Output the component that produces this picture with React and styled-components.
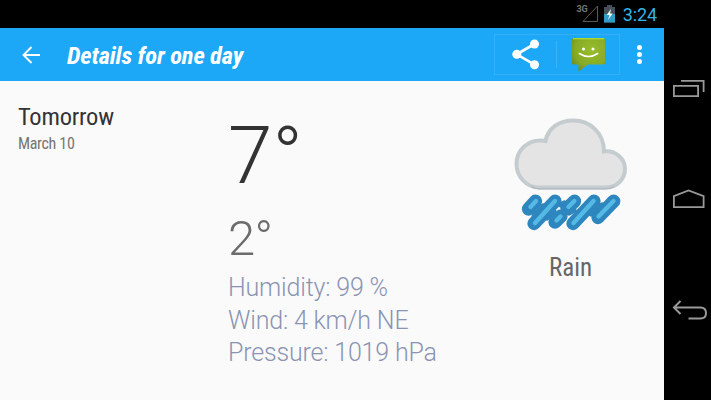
import React from "react";
import styled, { createGlobalStyle } from "styled-components";

const GlobalStyle = createGlobalStyle`
  * { box-sizing: border-box; }
  body { margin: 0; background: #000; overflow: hidden; }
  svg { display: block; flex: none; }
`;

const Device = styled.div`
  display: grid;
  grid-template-columns: 664px 47px;
  width: 711px;
  height: 400px;
  background: #000;
  font-family: Roboto, "Liberation Sans", sans-serif;
`;

const Screen = styled.div`
  display: grid;
  grid-template-rows: 28px 53px 1fr;
  min-width: 0;
`;

const StatusBar = styled.div`
  display: flex;
  align-items: flex-start;
  justify-content: flex-end;
  padding-right: 7px;
  background: #000;
`;

const StatusGroup = styled.div`
  display: flex;
  align-items: flex-start;
  gap: 5px;
  padding-top: 5px;
`;

const NetworkLabel = styled.span`
  margin-right: -11px;
  font-weight: 700;
  font-size: 9px;
  line-height: 9px;
  color: #777;
`;

const Clock = styled.span`
  margin-left: 8px;
  font-size: 18px;
  line-height: 29px;
  letter-spacing: -0.1px;
  color: #33b5e5;
`;

const AppBar = styled.header`
  display: flex;
  align-items: center;
  padding-left: 21px;
  background: #1da8f7;
`;

const Condensed = styled.span`
  display: block;
  width: max-content;
  font-family: "Roboto Condensed", Roboto, sans-serif;
  font-stretch: 75%;
  font-size: ${(p) => p.$size}px;
  line-height: ${(p) => p.$line}px;
  font-weight: ${(p) => p.$weight || 400};
  letter-spacing: ${(p) => p.$tracking || 0}px;
  color: ${(p) => p.$color};
`;

const Title = styled(Condensed)`
  flex: 1;
  margin-left: 26px;
  padding-top: 3px;
  font-style: italic;
  white-space: nowrap;
`;

const RainLabel = styled(Condensed)`
  margin: 19px 0 0 2px;
`;

const ShareBox = styled.div`
  display: flex;
  align-items: center;
  width: 126px;
  height: 41px;
  padding-left: 17px;
  border: 1px solid #35affa;
`;

const Divider = styled.div`
  width: 1px;
  height: 27px;
  margin: 0 15px 0 16px;
  background: #3bb1f9;
`;

const Overflow = styled.div`
  display: flex;
  flex-direction: column;
  gap: 2px;
  margin: 0 22px 0 17px;
`;

const Dot = styled.i`
  width: 5px;
  height: 5px;
  border-radius: 50%;
  background: #fff;
`;

const Content = styled.main`
  display: grid;
  grid-template-columns: 210px 266px 188px;
  padding-left: 18px;
  background: #fafafa;
  overflow: hidden;
`;

const DateColumn = styled.section`
  padding-top: 21px;
`;

const Readings = styled.section`
  padding-top: 29px;
`;

const Temperature = styled.div`
  font-size: ${(p) => p.$size}px;
  line-height: ${(p) => p.$line}px;
  font-weight: 300;
  letter-spacing: ${(p) => p.$tracking || 0}px;
  color: ${(p) => p.$color};
`;

const LowTemperature = styled(Temperature)`
  padding-top: 2px;
`;

const Measurement = styled.div`
  font-size: 25px;
  line-height: 32.5px;
  font-weight: 300;
  letter-spacing: -0.18px;
  color: #8a94b2;
  white-space: nowrap;
`;

const Conditions = styled.section`
  display: flex;
  flex-direction: column;
  align-items: center;
  width: 151px;
  padding-top: 35px;
`;

const NavBar = styled.nav`
  display: flex;
  flex-direction: column;
  gap: 89px;
  padding: 79px 0 0 7px;
  background: #000;
`;

const SignalIcon = () => (
  <svg width="17" height="18" viewBox="0 0 17 18">
    <path d="M15.500 1V16.500H1Z" fill="none" stroke="#5a5a5a" />
  </svg>
);

const BatteryIcon = () => (
  <svg width="11" height="18" viewBox="0 0 11 18">
    <path d="M3 0h5v2h3v15.500H0V2h3z" fill="#47515b" />
    <path d="M0 9h11v8.500H0z" fill="#2f9dc6" />
    <path d="M7.200 3.800 2.700 10h2.800L4 15 8.600 8.500H6z" fill="#fff" />
  </svg>
);

const BackArrow = () => (
  <svg width="20" height="18" viewBox="0 0 20 18">
    <path d="M19 9H3M10.500 1 2.500 9l8 8" fill="none" stroke="#fff" strokeWidth="1.900" />
  </svg>
);

const ShareIcon = () => (
  <svg width="28" height="31" viewBox="0 0 28 31">
    <path d="M22.500 5 4.700 15.300l17.800 10.400" fill="none" stroke="#fff" strokeWidth="2.700" />
    <g fill="#fff">
      <circle cx="22.500" cy="5" r="4.500" />
      <circle cx="4.800" cy="15.300" r="4.500" />
      <circle cx="22.500" cy="25.700" r="4.500" />
    </g>
  </svg>
);

const MessageIcon = () => (
  <svg width="33" height="34" viewBox="0 0 33 34">
    <defs>
      <radialGradient id="bubble" cx=".6" cy=".35" r=".85">
        <stop offset="0" stopColor="#98bd2c" />
        <stop offset=".6" stopColor="#86aa25" />
        <stop offset="1" stopColor="#5f7f18" />
      </radialGradient>
    </defs>
    <path d="M1.500 0h30Q33 0 33 1.500V25Q33 26.500 31.500 26.500H16L6.500 33.500V26.500h-5Q0 26.500 0 25V1.500Q0 0 1.500 0z" fill="url(#bubble)" />
    <path d="M1 .7h31" stroke="#b4dc2d" strokeWidth="1.200" />
    <g fill="#fff">
      <circle cx="11.500" cy="11" r="1.500" />
      <circle cx="21" cy="11" r="1.500" />
    </g>
    <path d="M7.300 15.500Q16.500 21.500 25.700 15.500" fill="none" stroke="#fff" strokeWidth="1.500" strokeLinecap="round" />
  </svg>
);

const RainCloud = () => (
  <svg width="116" height="118" viewBox="512 116 116 118">
    <path
      d="M539 187.500C526 187.500 516.500 176 516.500 164C516.500 150 528 140 541 140.500L545.500 141C548 128 559 120.500 573.500 120.500C590 120.500 604 133 604 151.500C616 150 625 159 625 169C625 179 617 187.500 606 187.500Z"
      fill="#e4e4e4"
      stroke="#c5ccd0"
      strokeWidth="4"
    />
    <path d="M531 186.500Q535 188.800 539 188.800H606Q610 188.800 614 186.500" fill="none" stroke="#b0b8bd" strokeWidth="1.300" />
    <g stroke="#2d86bd" strokeLinecap="round">
      <path d="M535.500 201.200 528.500 209M555 201.200 534 223.500M574.500 201.200 567 208.500M561 216 555 222M594 201.200 573 223.500M613.700 201.200 598 217.500" strokeWidth="13.300" />
      <path d="M543 206 534 216M564 203 561 205M554 211 547 218M564 211 562 214M574 210 569 213M602 205 591 214" strokeWidth="5" />
    </g>
    <path
      d="M536 201 530.500 207M555 201 535 223M574.300 201 568.500 207M560.500 216.500 556.500 220.500M593.500 201 573.500 223M613.500 201 598.500 216.500"
      stroke="#55b9e6"
      strokeWidth="4.400"
      strokeLinecap="round"
    />
  </svg>
);

const navStroke = { fill: "none", stroke: "#999", strokeWidth: 1.8 };

const RecentIcon = () => (
  <svg width="34" height="19" viewBox="0 0 34 19">
    <path d="M2.900 6.900H27.100V17.100H2.900zM10 1.900H32.600V13" {...navStroke} />
  </svg>
);

const HomeIcon = () => (
  <svg width="34" height="22" viewBox="0 0 34 22">
    <path d="M2.900 20.100V9.100L17.500 3.500 32.600 9.100V20.100z" {...navStroke} />
  </svg>
);

const ReturnIcon = () => (
  <svg width="38" height="23" viewBox="0 0 38 23">
    <path d="M9.500 3 3 9.500l6.500 6.500M3 9.500H29.500Q35 9.500 35 15T29.500 20.500H17.500" {...navStroke} strokeWidth="2" />
  </svg>
);

export default function App() {
  return (
    <Device>
      <GlobalStyle />
      <Screen>
        <StatusBar>
          <StatusGroup>
            <NetworkLabel>3G</NetworkLabel>
            <SignalIcon />
            <BatteryIcon />
          </StatusGroup>
          <Clock>3:24</Clock>
        </StatusBar>
        <AppBar>
          <BackArrow />
          <Title $size={24.5} $line={28} $weight={700} $tracking={-0.13} $color="#fff">
            Details for one day
          </Title>
          <ShareBox>
            <ShareIcon />
            <Divider />
            <MessageIcon />
          </ShareBox>
          <Overflow>
            <Dot />
            <Dot />
            <Dot />
          </Overflow>
        </AppBar>
        <Content>
          <DateColumn>
            <Condensed $size={24.5} $line={30} $tracking={-0.2} $color="#333">Tomorrow</Condensed>
            <Condensed $size={16} $line={23} $tracking={-0.32} $color="#757575">March 10</Condensed>
          </DateColumn>
          <Readings>
            <Temperature $size={80} $line={93} $color="#333">7°</Temperature>
            <LowTemperature $size={49} $line={67} $tracking={-0.8} $color="#6c6c6c">2°</LowTemperature>
            <Measurement>Humidity: 99 %</Measurement>
            <Measurement>Wind: 4 km/h NE</Measurement>
            <Measurement>Pressure: 1019 hPa</Measurement>
          </Readings>
          <Conditions>
            <RainCloud />
            <RainLabel $size={25} $line={30} $color="#666">Rain</RainLabel>
          </Conditions>
        </Content>
      </Screen>
      <NavBar>
        <RecentIcon />
        <HomeIcon />
        <ReturnIcon />
      </NavBar>
    </Device>
  );
}
